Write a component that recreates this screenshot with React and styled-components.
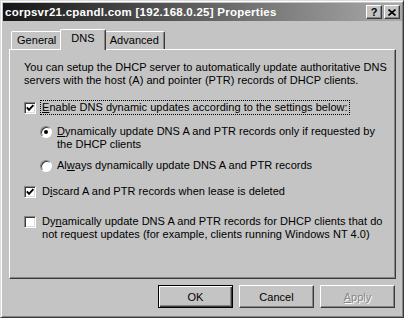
import React from "react";
import styled, { createGlobalStyle } from "styled-components";

const GlobalStyle = createGlobalStyle`
  html, body {
    margin: 0;
    padding: 0;
    background: #c4c4c4;
  }
  * {
    box-sizing: border-box;
  }
`;

export default function App() {
  return (
    <>
      <GlobalStyle />
      <Window>
        <TitleBar>
          <TitleText>corpsvr21.cpandl.com [192.168.0.25] Properties</TitleText>
          <TitleButtons>
            <CaptionButton>?</CaptionButton>
            <CaptionButton $gap>
              <svg width="8" height="7" viewBox="0 0 8 7">
                <path d="M0.5 0.5 L7.5 6.5 M7.5 0.5 L0.5 6.5" stroke="#000" strokeWidth="1.6" />
              </svg>
            </CaptionButton>
          </TitleButtons>
        </TitleBar>

        <Body>
          <TabRow>
            <Tab>General</Tab>
            <Tab $active>DNS</Tab>
            <Tab>Advanced</Tab>
          </TabRow>

          <Panel>
            <Intro>
              You can setup the DHCP server to automatically update authoritative DNS
              <br />
              servers with the host (A) and pointer (PTR) records of DHCP clients.
            </Intro>

            <Option $top={14}>
              <CheckBox $checked />
              <FocusLabel>
                <u>E</u>nable DNS dynamic updates according to the settings below:
              </FocusLabel>
            </Option>

            <Option $top={10} $indent={16}>
              <Radio $checked />
              <RadioLabel>
                <u>D</u>ynamically update DNS A and PTR records only if requested by
                <br />
                the DHCP clients
              </RadioLabel>
            </Option>

            <Option $top={8} $indent={16}>
              <Radio />
              <RadioLabel>
                Al<u>w</u>ays dynamically update DNS A and PTR records
              </RadioLabel>
            </Option>

            <Option $top={13}>
              <CheckBox $checked />
              <Label>
                D<u>i</u>scard A and PTR records when lease is deleted
              </Label>
            </Option>

            <Option $top={17}>
              <CheckBox />
              <Label>
                Dy<u>n</u>amically update DNS A and PTR records for DHCP clients that do
                <br />
                not request updates (for example, clients running Windows NT 4.0)
              </Label>
            </Option>
          </Panel>

          <ButtonRow>
            <PushButton $default>OK</PushButton>
            <PushButton>Cancel</PushButton>
            <PushButton $disabled>
              <u>A</u>pply
            </PushButton>
          </ButtonRow>
        </Body>
      </Window>
    </>
  );
}

function CheckBox({ $checked }) {
  return (
    <CheckFrame>
      {$checked && (
        <svg width="10" height="10" viewBox="0 0 10 10">
          <path d="M1.8 4.4 L4 6.8 L8.4 2.2" fill="none" stroke="#000" strokeWidth="1.9" />
        </svg>
      )}
    </CheckFrame>
  );
}

const Window = styled.div`
  width: 404px;
  height: 318px;
  padding: 1px;
  background: #c4c4c4;
  border-top: 1px solid #dcdcdc;
  border-left: 1px solid #dcdcdc;
  border-right: 1px solid #3a3a3a;
  border-bottom: 1px solid #3a3a3a;
  box-shadow: inset 1px 1px #fff, inset -1px -1px #868686;
  display: flex;
  flex-direction: column;
  font-family: "Liberation Sans", Arial, sans-serif;
  font-size: 11px;
  letter-spacing: 0.03px;
  color: #000;
`;

const TitleBar = styled.div`
  height: 18px;
  margin: 1px 0 0 1px;
  padding: 0 2px 0 2px;
  display: flex;
  align-items: center;
  justify-content: space-between;
  background: linear-gradient(to right, #161616, #5a5a5a 45%, #aaaaaa);
`;

const TitleText = styled.span`
  color: #fff;
  font-weight: bold;
  font-size: 11.5px;
  letter-spacing: 0.25px;
  white-space: nowrap;
`;

const TitleButtons = styled.div`
  display: flex;
  align-items: center;
`;

const CaptionButton = styled.div`
  width: 16px;
  height: 14px;
  margin-left: ${(p) => (p.$gap ? "2px" : "0")};
  display: flex;
  align-items: center;
  justify-content: center;
  background: #c4c4c4;
  border-top: 1px solid #fff;
  border-left: 1px solid #fff;
  border-right: 1px solid #3a3a3a;
  border-bottom: 1px solid #3a3a3a;
  box-shadow: inset -1px -1px #868686;
  font-weight: bold;
  font-size: 11px;
  line-height: 1;
`;

const Body = styled.div`
  padding: 8px 5px 0 6px;
  display: flex;
  flex-direction: column;
`;

const TabRow = styled.div`
  display: flex;
  align-items: flex-end;
  padding-left: 3px;
  height: 21px;
  margin-bottom: -1px;
  position: relative;
  z-index: 1;
`;

const Tab = styled.div`
  height: ${(p) => (p.$active ? "21px" : "18px")};
  margin: ${(p) => (p.$active ? "0 -2px" : "0 0 1px 0")};
  padding: ${(p) => (p.$active ? "2px 10px 0 10px" : "2px 5px 0 5px")};
  background: #c4c4c4;
  border-top: 1px solid #fff;
  border-left: 1px solid #fff;
  border-right: 1px solid #3a3a3a;
  border-radius: 2px 2px 0 0;
  box-shadow: inset -1px 0 #868686;
  position: relative;
  z-index: ${(p) => (p.$active ? 2 : 1)};
  line-height: 13px;
`;

const Panel = styled.div`
  width: 387px;
  height: 230px;
  margin-left: 1px;
  padding: 10px 0 0 14px;
  border-top: 1px solid #fff;
  border-left: 1px solid #fff;
  border-right: 1px solid #3a3a3a;
  border-bottom: 1px solid #3a3a3a;
  box-shadow: inset -1px -1px #868686;
  display: flex;
  flex-direction: column;
  white-space: nowrap;
`;

const Intro = styled.div`
  line-height: 13px;
  margin-top: 1px;
`;

const Option = styled.div`
  display: flex;
  align-items: flex-start;
  margin-top: ${(p) => p.$top}px;
  padding-left: ${(p) => p.$indent || 0}px;
`;

const CheckFrame = styled.div`
  width: 12px;
  height: 12px;
  flex: none;
  margin-top: 1px;
  display: flex;
  align-items: center;
  justify-content: center;
  background: #fff;
  border-top: 1px solid #868686;
  border-left: 1px solid #868686;
  border-right: 1px solid #fff;
  border-bottom: 1px solid #fff;
  box-shadow: inset 1px 1px #3a3a3a, inset -1px -1px #dcdcdc;
`;

const Radio = styled.div`
  width: 12px;
  height: 12px;
  flex: none;
  margin-top: 1px;
  border-radius: 50%;
  background: #fff;
  border: 1px solid;
  border-color: #868686 #fff #fff #868686;
  box-shadow: inset 1px 1px #3a3a3a;
  display: flex;
  align-items: center;
  justify-content: center;

  &::after {
    content: "";
    width: 4px;
    height: 4px;
    border-radius: 50%;
    background: ${(p) => (p.$checked ? "#000" : "transparent")};
  }
`;

const Label = styled.span`
  margin-left: 6px;
  line-height: 13px;
`;

const FocusLabel = styled.span`
  margin-left: 4px;
  margin-top: -1px;
  padding: 0 1px;
  line-height: 13px;
  border: 1px dotted #000;
`;

const RadioLabel = styled.span`
  margin-left: 5px;
  line-height: 13px;
`;

const ButtonRow = styled.div`
  display: flex;
  justify-content: flex-end;
  gap: 6px;
  margin-top: 6px;
  padding-right: 2px;
`;

const PushButton = styled.div`
  width: 75px;
  height: 23px;
  display: flex;
  align-items: center;
  justify-content: center;
  background: #c4c4c4;
  border-top: 1px solid ${(p) => (p.$default ? "#000" : "#fff")};
  border-left: 1px solid ${(p) => (p.$default ? "#000" : "#fff")};
  border-right: 1px solid ${(p) => (p.$default ? "#000" : "#3a3a3a")};
  border-bottom: 1px solid ${(p) => (p.$default ? "#000" : "#3a3a3a")};
  box-shadow: ${(p) =>
    p.$default
      ? "inset 1px 1px #fff, inset -1px -1px #3a3a3a, inset -2px -2px #868686"
      : "inset -1px -1px #868686"};
  color: ${(p) => (p.$disabled ? "#868686" : "#000")};
  text-shadow: ${(p) => (p.$disabled ? "1px 1px #fff" : "none")};
  font-size: 11px;
`;
